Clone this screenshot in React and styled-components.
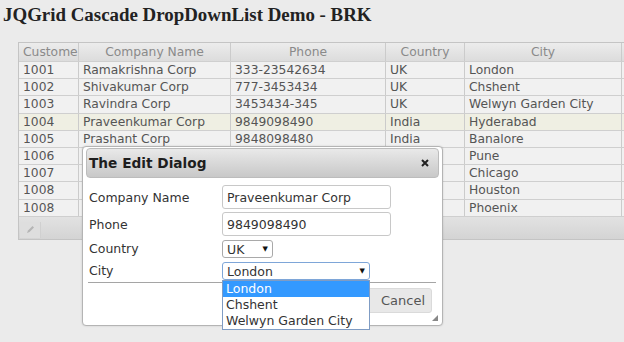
import React from "react";
import styled, { createGlobalStyle } from "styled-components";

const GlobalStyle = createGlobalStyle`
  body {
    margin: 0;
    background: #ebebeb;
    overflow: hidden;
  }
`;

const COLS = "60px 152px 155px 79px 157px 60px";

const Page = styled.div`
  position: relative;
  width: 624px;
  height: 342px;
  overflow: hidden;
`;

const Heading = styled.h1`
  margin: 0;
  padding: 4px 0 0 3px;
  font-family: "Liberation Serif", serif;
  font-size: 18.9px;
  line-height: 22px;
  font-weight: bold;
  color: #222;
`;

const Grid = styled.div`
  margin: 16px 0 0 18px;
  width: 664px;
  border: 1px solid #c4c4c4;
  background: #f0f0f0;
  font-family: "DejaVu Sans", Verdana, sans-serif;
  font-size: 12.3px;
`;

const Row = styled.div`
  display: grid;
  grid-template-columns: ${COLS};
  height: ${(p) => (p.$head ? "19px" : "17.2px")};
  box-sizing: border-box;
  border-bottom: 1px solid #cfcfcf;
  background: ${(p) =>
    p.$head
      ? "linear-gradient(#ececec, #dcdcdc)"
      : p.$hl
      ? "#efefe3"
      : "#f1f1f1"};
  color: ${(p) => (p.$head ? "#8a8a8a" : "#555")};
`;

const Cell = styled.div`
  box-sizing: border-box;
  border-right: 1px solid ${(p) => (p.$last ? "transparent" : "#cbcbcb")};
  padding: 0 4px;
  display: flex;
  align-items: center;
  justify-content: ${(p) => (p.$center ? "center" : "flex-start")};
  white-space: nowrap;
  overflow: hidden;
`;

const Pager = styled.div`
  display: flex;
  height: 22px;
  background: linear-gradient(#e2e2e2, #d4d4d4);
`;

const PagerButton = styled.div`
  width: 20px;
  margin-left: 1px;
  margin-top: 5px;
  height: 16px;
  display: flex;
  align-items: center;
  justify-content: center;
  border-right: 1px solid #d0d0d0;
  background: #dedede;
`;

const Dialog = styled.div`
  position: absolute;
  left: 82px;
  top: 146px;
  width: 361px;
  height: 180px;
  box-sizing: border-box;
  padding: 1px 3px;
  background: #fff;
  border: 1px solid #b4b4b4;
  border-radius: 4px;
  box-shadow: 0 0 2px rgba(0, 0, 0, 0.15);
  font-family: "DejaVu Sans", Verdana, sans-serif;
  color: #333;
`;

const TitleBar = styled.div`
  display: flex;
  align-items: center;
  justify-content: space-between;
  height: 30px;
  box-sizing: border-box;
  padding: 0 9px 0 2px;
  border: 1px solid #bcbcbc;
  border-radius: 4px;
  background: linear-gradient(#e9e9e9, #c8c8c8);
  font-size: 13.7px;
  font-weight: bold;
  color: #1e1e1e;
`;

const Form = styled.div`
  display: grid;
  grid-template-columns: 133px 1fr;
  grid-template-rows: 24px 24px 19px 19px;
  row-gap: 3px;
  padding: 7px 0 0 3px;
  font-size: 12.5px;
`;

const Label = styled.div`
  align-self: center;
  line-height: 15px;
`;

const TextBox = styled.div`
  width: 169px;
  height: 24px;
  box-sizing: border-box;
  border: 1px solid #c8c8c8;
  border-radius: 3px;
  padding: 0 4px;
  display: flex;
  align-items: center;
`;

const SelectWrap = styled.div`
  position: relative;
  align-self: end;
`;

const Select = styled.div`
  width: ${(p) => p.$w}px;
  height: 18px;
  box-sizing: border-box;
  border: 1px solid ${(p) => (p.$focus ? "#7ea6d8" : "#a9a9a9")};
  border-radius: 3px;
  padding: 0 4px;
  display: flex;
  align-items: center;
  justify-content: space-between;
`;

const Arrow = styled.span`
  font-size: 7px;
  color: #111;
`;

const OptionList = styled.div`
  position: absolute;
  left: 0;
  top: 18px;
  width: 148px;
  box-sizing: border-box;
  border: 1px solid #7f9cc4;
  background: #fff;
  z-index: 2;
`;

const Option = styled.div`
  height: 16px;
  line-height: 16px;
  padding: 0 3px;
  background: ${(p) => (p.$active ? "#3399ff" : "#fff")};
  color: ${(p) => (p.$active ? "#fff" : "#333")};
`;

const Divider = styled.div`
  margin: 2px 3px 0 2px;
  border-top: 1px solid #a5a5a5;
`;

const ButtonBar = styled.div`
  display: flex;
  justify-content: flex-end;
  gap: 2px;
  padding: 5px 7px 0 0;
`;

const Button = styled.div`
  height: 25px;
  box-sizing: border-box;
  padding: ${(p) => p.$pad};
  display: flex;
  align-items: center;
  border: 1px solid #dadada;
  border-radius: 3px;
  background: #e8e8e8;
  color: #555;
  font-size: 13px;
`;

const Grip = styled.svg`
  position: absolute;
  right: 4px;
  bottom: 4px;
`;

const rows = [
  ["1001", "Ramakrishna Corp", "333-23542634", "UK", "London"],
  ["1002", "Shivakumar Corp", "777-3453434", "UK", "Chshent"],
  ["1003", "Ravindra Corp", "3453434-345", "UK", "Welwyn Garden City"],
  ["1004", "Praveenkumar Corp", "9849098490", "India", "Hyderabad"],
  ["1005", "Prashant Corp", "9848098480", "India", "Banalore"],
  ["1006", "", "", "", "Pune"],
  ["1007", "", "", "", "Chicago"],
  ["1008", "", "", "", "Houston"],
  ["1008", "", "", "", "Phoenix"],
];

const heads = ["Customer", "Company Name", "Phone", "Country", "City"];

export default function App() {
  return (
    <Page>
      <GlobalStyle />
      <Heading>JQGrid Cascade DropDownList Demo - BRK</Heading>
      <Grid>
        <Row $head>
          {heads.map((h, i) => (
            <Cell key={h} $center={i > 0}>
              {h}
            </Cell>
          ))}
          <Cell $last />
        </Row>
        {rows.map((r, i) => (
          <Row key={i} $hl={i === 3}>
            {r.map((c, j) => (
              <Cell key={j}>{c}</Cell>
            ))}
            <Cell $last />
          </Row>
        ))}
        <Pager>
          <PagerButton>
            <svg width="9" height="9" viewBox="0 0 9 9">
              <path d="M1 8 L2 5.5 L6.5 1 L8 2.5 L3.5 7 Z" fill="#b5b5b5" />
            </svg>
          </PagerButton>
        </Pager>
      </Grid>

      <Dialog>
        <TitleBar>
          <span>The Edit Dialog</span>
          <svg width="8" height="8" viewBox="0 0 8 8">
            <path d="M1 1 L7 7 M7 1 L1 7" stroke="#222" strokeWidth="2" />
          </svg>
        </TitleBar>
        <Form>
          <Label>Company Name</Label>
          <TextBox>Praveenkumar Corp</TextBox>
          <Label>Phone</Label>
          <TextBox>9849098490</TextBox>
          <Label>Country</Label>
          <SelectWrap>
            <Select $w={51}>
              UK<Arrow>▼</Arrow>
            </Select>
          </SelectWrap>
          <Label>City</Label>
          <SelectWrap>
            <Select $w={148} $focus>
              London<Arrow>▼</Arrow>
            </Select>
            <OptionList>
              <Option $active>London</Option>
              <Option>Chshent</Option>
              <Option>Welwyn Garden City</Option>
            </OptionList>
          </SelectWrap>
        </Form>
        <Divider />
        <ButtonBar>
          <Button $pad="0 4px 0 10px">Submit</Button>
          <Button $pad="0 6px 0 13px">Cancel</Button>
        </ButtonBar>
        <Grip width="6" height="6" viewBox="0 0 6 6">
          <path d="M6 0 L6 6 L0 6 Z" fill="#888" />
        </Grip>
      </Dialog>
    </Page>
  );
}
